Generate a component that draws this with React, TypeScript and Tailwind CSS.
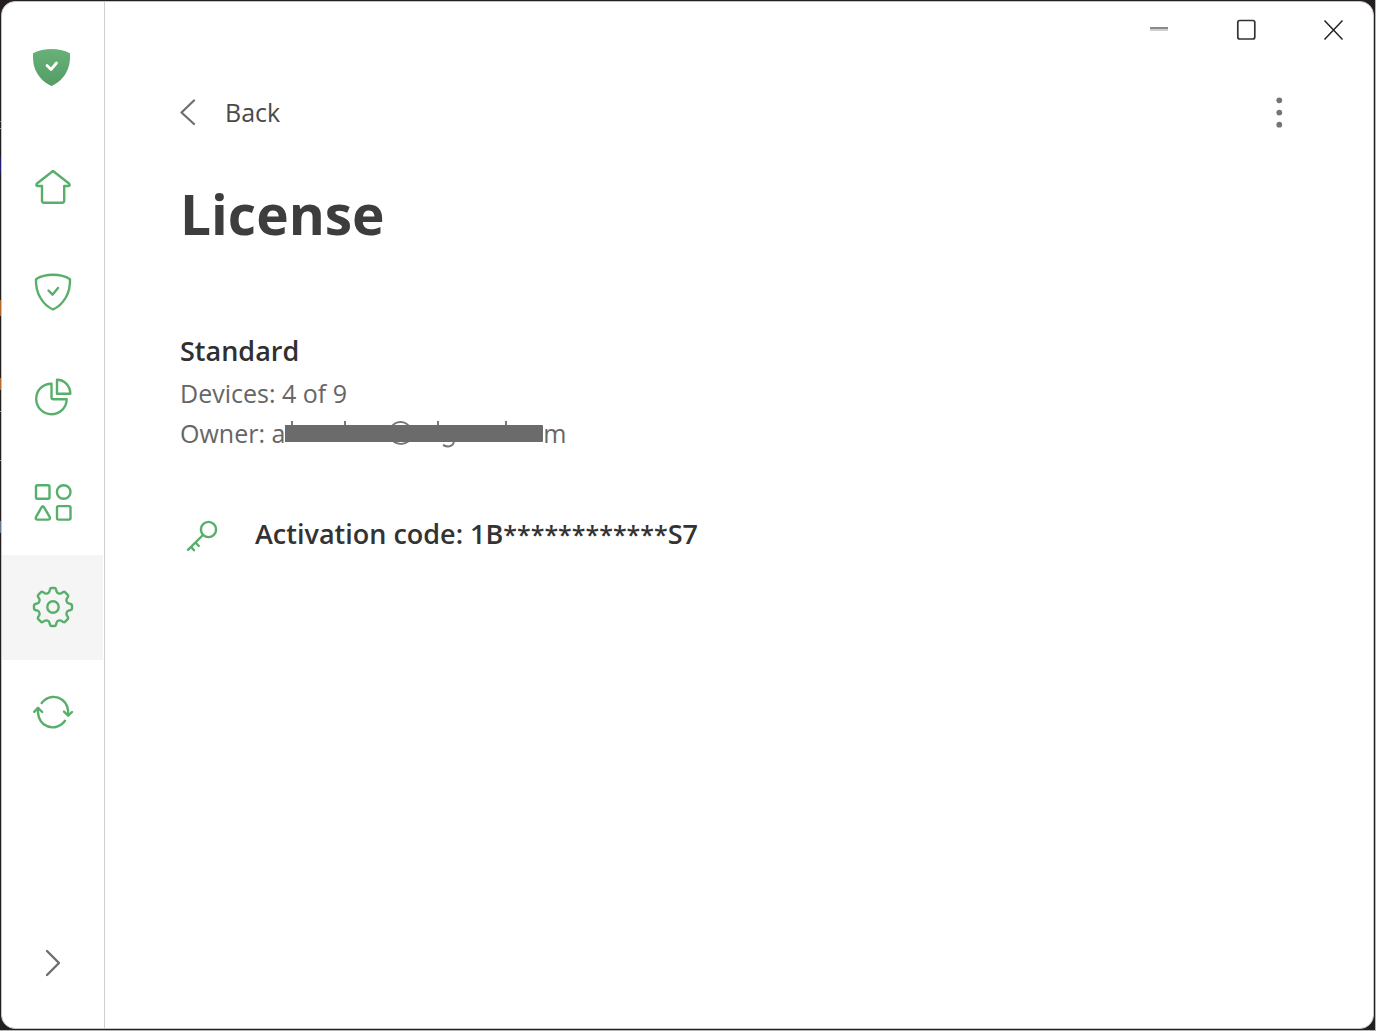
import React, { useState } from 'react';

type IconProps = { children: React.ReactNode };

// All sidebar icons share one 48px box, drawn at 1:1
const NavIcon = ({ children }: IconProps) => (
  <svg width="48" height="48" viewBox="0 0 48 48" fill="none" stroke="#57af6b" strokeWidth="2.4" strokeLinecap="round" strokeLinejoin="round" aria-hidden="true">
    {children}
  </svg>
);

const navItems = [
  {
    id: 'home',
    label: 'Home',
    icon: (
      <NavIcon>
        <path d="M24 8 L40 20.5 Q41.500 22.800 39.500 23 H35.200 V37.500 Q35.200 39.700 33.200 39.700 H15 Q13 39.700 13 37.500 V23 H8.500 Q6.500 22.800 8 20.500 Z" />
      </NavIcon>
    ),
  },
  {
    id: 'protection',
    label: 'Protection',
    icon: (
      <NavIcon>
        <path d="M24 6.800 C29.500 6.800 36 8 41 11.200 C41.200 17 40.300 23.500 36.800 29.500 C33.500 35.200 28.500 39.500 24 41.500 C19.500 39.500 14.500 35.200 11.200 29.500 C7.700 23.500 6.800 17 7 11.200 C12 8 18.500 6.800 24 6.800 Z" />
        <path d="M19.500 22.500 L23.500 26.700 L29 20" />
      </NavIcon>
    ),
  },
  {
    id: 'statistics',
    label: 'Statistics',
    icon: (
      <NavIcon>
        <path d="M22.500 10.800 C13.500 10.800 7.200 17.500 7.200 25.800 C7.200 34.500 14 41.200 22.300 41.200 C31 41.200 37.700 34.500 37.700 26.300 H24.500 Q22.500 26.300 22.500 24.300 Z" />
        <path d="M28 6.800 C35.500 6.800 41.300 13 41.300 20.800 H28 Z" />
      </NavIcon>
    ),
  },
  {
    id: 'apps',
    label: 'Filtered apps',
    icon: (
      <NavIcon>
        <rect x="7" y="7.300" width="13.500" height="13.500" rx="1.500" />
        <circle cx="34.700" cy="14" r="6.800" />
        <path d="M12.500 29.300 Q13.800 27.300 15.100 29.300 L20.600 38.800 Q21.600 41.500 19.500 41.600 H8.200 Q6 41.500 7.100 38.800 Z" />
        <rect x="28" y="28.100" width="13.500" height="13.500" rx="1.500" />
      </NavIcon>
    ),
  },
  {
    id: 'settings',
    label: 'Settings',
    icon: (
      <NavIcon>
        <path d="M22.500 5 H25.500 Q26.700 5 27 6.300 L27.600 8.500 Q28 9.900 29.500 10.300 Q31 11 32.300 10.200 L34.200 9 Q35.300 8.400 36.200 9.300 L38.700 11.800 Q39.600 12.700 39 13.800 L37.800 15.700 Q37 17 37.700 18.500 Q38.100 20 39.500 20.400 L41.700 21 Q43 21.300 43 22.500 V25.500 Q43 26.700 41.700 27 L39.500 27.600 Q38.100 28 37.700 29.500 Q37 31 37.800 32.300 L39 34.200 Q39.600 35.300 38.700 36.200 L36.200 38.700 Q35.300 39.600 34.200 39 L32.300 37.800 Q31 37 29.500 37.700 Q28 38.100 27.600 39.500 L27 41.700 Q26.700 43 25.500 43 H22.500 Q21.300 43 21 41.700 L20.400 39.500 Q20 38.100 18.500 37.700 Q17 37 15.700 37.800 L13.800 39 Q12.700 39.600 11.800 38.700 L9.300 36.200 Q8.400 35.300 9 34.200 L10.200 32.300 Q11 31 10.300 29.500 Q9.900 28 8.500 27.600 L6.300 27 Q5 26.700 5 25.500 V22.500 Q5 21.300 6.300 21 L8.500 20.400 Q9.900 20 10.300 18.500 Q11 17 10.200 15.700 L9 13.800 Q8.400 12.700 9.300 11.800 L11.800 9.300 Q12.700 8.400 13.800 9 L15.700 10.200 Q17 11 18.500 10.300 Q20 9.900 20.400 8.500 L21 6.300 Q21.300 5 22.500 5 Z" />
        <circle cx="24" cy="24" r="5.700" />
      </NavIcon>
    ),
  },
  {
    id: 'updates',
    label: 'Check for updates',
    icon: (
      <NavIcon>
        <path d="M12.700 15 C18.500 7.500 27.500 7.500 33.500 12 C38 15.600 39.500 20.500 39.200 27" />
        <path d="M35 23.600 L39.200 27.600 L43 24" />
        <path d="M36 32.800 C30.500 40.500 21 41 14.700 36.300 C10 32.500 8.500 27.500 8.900 20.500" />
        <path d="M5.200 23.800 L9 19.800 L13.200 24" />
      </NavIcon>
    ),
  },
];

const App = () => {
  const [active, setActive] = useState('settings');

  return (
    <div className="relative flex min-h-screen border-r border-b border-[#b5b5b5] bg-[#231f20] p-px font-['Open_Sans','Noto_Sans',sans-serif] text-[#3d3d3d]">
      {/* Desktop showing past the left edge of the window */}
      <div className="absolute top-[121px] left-0 h-px w-px bg-[#a66]" />
      <div className="absolute top-[128px] left-0 h-px w-px bg-[#999]" />
      <div className="absolute top-[157px] left-0 h-4 w-px bg-[#22206a]" />
      <div className="absolute top-[300px] left-0 h-4 w-px bg-[#b06a30]" />
      <div className="absolute top-[378px] left-0 h-3 w-px bg-[#b06a30]" />
      <div className="absolute top-[411px] left-0 h-px w-px bg-[#999]" />
      <div className="absolute top-[460px] left-0 h-px w-px bg-[#999]" />
      <div className="absolute top-[521px] left-0 h-3 w-px bg-[#678]" />

      <div className="flex flex-1 overflow-hidden rounded-[14px] border border-[#c4c4c4] bg-white">
        <aside className="flex w-[103px] shrink-0 flex-col border-r border-[#cfcfcf] pr-px">
          <div className="flex h-[133px] items-center justify-center pb-[3px]">
            <svg width="48" height="48" viewBox="0 0 48 48" fill="none" role="img" aria-label="AdGuard">
              <defs>
                <linearGradient id="logo" x1="0" y1="0" x2="0" y2="1">
                  <stop offset="0" stopColor="#67b279" />
                  <stop offset="1" stopColor="#559c67" />
                </linearGradient>
              </defs>
              <path d="M22.500 6 C28.500 6 35.500 7.300 41 10.300 C41 16.500 41.300 22.500 37 30 C33.500 36 28 40.700 22.500 43 C17 40.700 11.500 36 8 30 C3.700 22.500 4 16.500 4 10.300 C9.500 7.300 16.500 6 22.500 6 Z" fill="url(#logo)" />
              <path d="M18 22.500 L22 26.500 L27.500 20" stroke="#fff" strokeWidth="2.800" strokeLinecap="round" strokeLinejoin="round" />
            </svg>
          </div>

          <nav className="flex flex-col">
            {navItems.map((item) => (
              <button
                key={item.id}
                type="button"
                aria-label={item.label}
                onClick={() => setActive(item.id)}
                className={`flex h-[105px] items-center justify-center pb-px ${active === item.id ? 'bg-[#f5f5f5]' : 'bg-white'}`}
              >
                {item.icon}
              </button>
            ))}
          </nav>

          <button type="button" aria-label="Expand menu" className="mt-auto mb-[42px] flex h-12 items-center justify-center">
            <svg width="24" height="30" viewBox="0 0 24 30" fill="none" stroke="#6e6e6e" strokeWidth="2.400" strokeLinecap="round" strokeLinejoin="round" aria-hidden="true">
              <path d="M6 4 L18 16 L6 28" />
            </svg>
          </button>
        </aside>

        <main className="flex-1">
          <div className="flex h-14 justify-end gap-[6px]">
            <button type="button" aria-label="Minimize" className="flex w-[81px] items-center justify-center">
              <svg width="20" height="20" viewBox="0 0 20 20" aria-hidden="true">
                <path d="M1 7 H19 V9 H1 Z" fill="#8a8a8a" />
                <path d="M1 9 H19 V11 H1 Z" fill="#cfcfcf" />
              </svg>
            </button>
            <button type="button" aria-label="Maximize" className="flex w-[81px] items-center justify-center">
              <svg width="20" height="22" viewBox="0 0 20 22" fill="none" stroke="#333" strokeWidth="1.700" aria-hidden="true">
                <rect x="1.800" y="1.500" width="17" height="18.500" rx="2" />
              </svg>
            </button>
            <button type="button" aria-label="Close" className="flex w-[81px] items-center justify-center">
              <svg width="20" height="22" viewBox="0 0 20 22" fill="none" stroke="#222" strokeWidth="1.500" aria-hidden="true">
                <path d="M1.500 1.500 L19.500 20.500 M19.500 1.500 L1.500 20.500" />
              </svg>
            </button>
          </div>

          <div className="pt-[34px] pr-[74px] pl-[75px]">
            <div className="flex h-10 items-center justify-between">
              <button type="button" className="flex items-center gap-[29px] text-[25px] leading-10 text-[#4a4a4a]">
                <svg width="16" height="28" viewBox="0 0 16 28" fill="none" stroke="#6e6e6e" strokeWidth="2.200" strokeLinecap="round" strokeLinejoin="round" aria-hidden="true">
                  <path d="M14 2.500 L1.500 14.500 L14 26" />
                </svg>
                Back
              </button>
              <button type="button" aria-label="More options" className="flex h-10 w-10 items-center justify-center">
                <svg width="8" height="32" viewBox="0 0 8 32" fill="#757575" aria-hidden="true">
                  <circle cx="4.300" cy="4.300" r="2.900" />
                  <circle cx="4.300" cy="16.600" r="2.900" />
                  <circle cx="4.300" cy="28.700" r="2.900" />
                </svg>
              </button>
            </div>

            <h1 className="mt-[46px] text-[55px] leading-[72px] font-bold">License</h1>

            <h2 className="mt-[81px] text-[27px] leading-10 font-semibold text-[#303030]">Standard</h2>
            <p className="mt-[2px] text-[25px] leading-10 text-[#666]">Devices: 4 of 9</p>
            <p className="flex text-[25px] leading-10 whitespace-pre text-[#666]">
              Owner: a
              {/* Struck-out part of the address */}
              <svg className="mt-1" width="258" height="32" viewBox="0 0 258 32" fill="none" stroke="#777" strokeWidth="2" role="img" aria-label="hidden">
                <path d="M7 4 V12 M60 4 V12 M153 4 V12 M221 4 V12" />
                <path d="M106 11 C110 3 121 3 125 11 M107 23 C112 28 119 28 124 24 M158 28 C164 31 169 29 169 23" />
                <rect x="-2" y="8" width="260" height="17" rx="1" fill="#6b6b6b" stroke="none" />
              </svg>
              m
            </p>

            <button type="button" className="mt-[61px] flex items-center gap-[35px] text-left text-[27px] leading-10 font-semibold text-[#333]">
              <svg width="40" height="40" viewBox="0 0 40 40" fill="none" stroke="#57af6b" strokeWidth="2.400" strokeLinecap="round" strokeLinejoin="round" aria-hidden="true">
                <circle cx="28.500" cy="15.500" r="7.600" />
                <path d="M23 21 L8 35.800 M11 32.800 L14 36.300 M15.500 28.500 L18.800 32" />
              </svg>
              <span>
                Activation code: 1B<span className="text-[25px]">************</span>S7
              </span>
            </button>
          </div>
        </main>
      </div>
    </div>
  );
};

export default App;
